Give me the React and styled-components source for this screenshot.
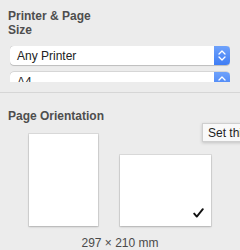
import styled, { createGlobalStyle } from 'styled-components';

const GlobalStyle = createGlobalStyle`
    html, body {
        margin: 0;
        padding: 0;
        background: #ececec;
        overflow: hidden;
    }
    body {
        font-family: "Liberation Sans", Arial, sans-serif;
        width: 240px;
        height: 250px;
    }
`;

const Panel = styled.div`
    position: relative;
    width: 240px;
    height: 250px;
    background: #ececec;
    overflow: hidden;
`;

const Section = styled.section`
    padding: ${p => p.$top}px 10px 0 8px;
`;

const Heading = styled.h2`
    margin: 0;
    max-width: ${p => p.$max || 'none'};
    font-size: 12px;
    line-height: 14px;
    font-weight: bold;
    color: #4e4e4e;
`;

const SelectClip = styled.div`
    margin: 9px 0 0 2px;
    width: 220px;
    height: 36px;
    overflow: hidden;
    display: flex;
    flex-direction: column;
    gap: 7px;
`;

const Select = styled.div`
    flex: none;
    display: flex;
    align-items: center;
    height: 19px;
    background: #fff;
    border-radius: 4px;
    box-shadow: 0 0 0 0.5px rgba(0, 0, 0, 0.18), 0 1px 1px rgba(0, 0, 0, 0.12);
    overflow: hidden;
`;

const SelectLabel = styled.span`
    flex: 1;
    padding-left: 7px;
    font-size: 12px;
    color: #222;
`;

const Stepper = styled.span`
    width: 16px;
    height: 100%;
    display: flex;
    align-items: center;
    justify-content: center;
    background: linear-gradient(#6fa2fb, #3f7df4);
`;

const Divider = styled.hr`
    margin: 10px 0 0;
    border: none;
    height: 1px;
    background: #d6d6d6;
`;

const Orientation = styled.div`
    display: inline-flex;
    flex-direction: column;
    align-items: center;
    margin: 11px 0 0 29px;
`;

const PageRow = styled.div`
    display: flex;
    align-items: flex-end;
    gap: 22px;
`;

const Page = styled.div`
    position: relative;
    width: ${p => p.$w}px;
    height: ${p => p.$h}px;
    background: #fff;
    box-shadow: 0 0 0 1px rgba(0, 0, 0, 0.07), 0 1px 2px rgba(0, 0, 0, 0.2);
`;

const Check = styled.svg`
    position: absolute;
    right: 7px;
    bottom: 8px;
`;

const Dimensions = styled.div`
    margin-top: 10px;
    font-size: 12px;
    line-height: 14px;
    color: #4a4a4a;
`;

const Tooltip = styled.div`
    position: absolute;
    left: 202px;
    top: 123px;
    height: 17px;
    padding: 0 6px 0 5px;
    display: flex;
    align-items: center;
    white-space: nowrap;
    font-size: 12px;
    color: #1e1e1e;
    background: #f9f9f9;
    border: 1px solid #cfcfcf;
    box-shadow: 0 1px 3px rgba(0, 0, 0, 0.18);
`;

function Chevrons() {
    return (
        <svg width="8" height="13" viewBox="0 0 8 13">
            <path d="M1 5 L4 2 L7 5 M1 8 L4 11 L7 8" fill="none" stroke="#fff" strokeWidth="1.3" strokeLinecap="round" strokeLinejoin="round" />
        </svg>
    );
}

export default function App() {
    return (
        <Panel>
            <GlobalStyle />
            <Section $top={9}>
                <Heading $max="96px">Printer &amp; Page Size</Heading>
                <SelectClip>
                    <Select>
                        <SelectLabel>Any Printer</SelectLabel>
                        <Stepper><Chevrons /></Stepper>
                    </Select>
                    <Select>
                        <SelectLabel>A4</SelectLabel>
                        <Stepper><Chevrons /></Stepper>
                    </Select>
                </SelectClip>
            </Section>
            <Divider />
            <Section $top={16}>
                <Heading>Page Orientation</Heading>
            </Section>
            <Orientation>
                <PageRow>
                    <Page $w={69} $h={92} />
                    <Page $w={91} $h={71}>
                        <Check width="11" height="10" viewBox="0 0 11 10">
                            <path d="M1.2 5.6 L3.8 8.6 L9.8 1.2" fill="none" stroke="#111" strokeWidth="1.9" strokeLinecap="round" strokeLinejoin="round" />
                        </Check>
                    </Page>
                </PageRow>
                <Dimensions>297 × 210 mm</Dimensions>
            </Orientation>
            <Tooltip>Set this as default</Tooltip>
        </Panel>
    );
}
